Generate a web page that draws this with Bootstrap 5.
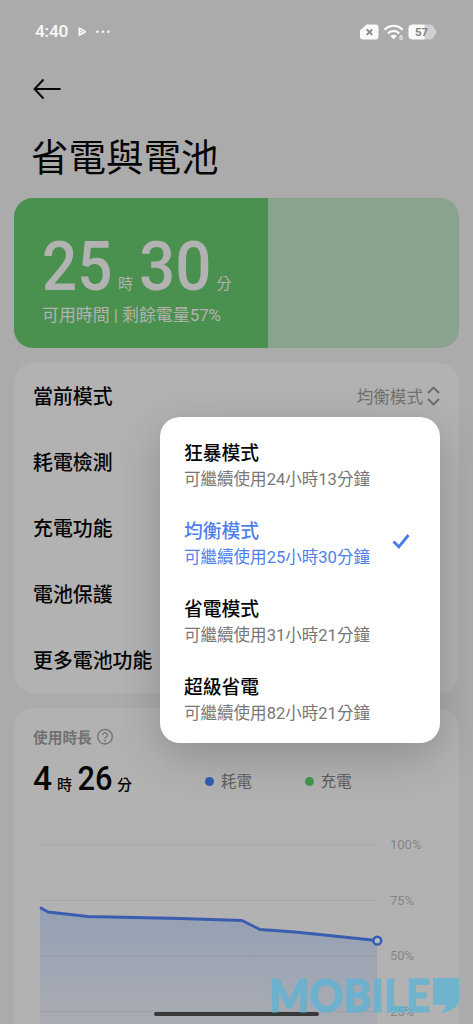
<!DOCTYPE html>
<html lang="zh-Hant">
<head>
<meta charset="utf-8">
<meta name="viewport" content="width=device-width, initial-scale=1">
<title>省電與電池</title>
<link href="https://cdn.jsdelivr.net/npm/bootstrap@5.3.0/dist/css/bootstrap.min.css" rel="stylesheet">
<style>
  html, body { height: 1024px; overflow: hidden; }
  body { background: #ababab; color: #050505; font-family: Roboto, "Noto Sans CJK TC", sans-serif; }
  svg { overflow: visible; }
  .screen { width: 473px; height: 1024px; padding: 0 14px; }
  .statusbar { height: 62px; padding: 2px 22px 0 21px; color: #fafafa; font-size: 17.3px; font-weight: 500; letter-spacing: -.2px; }
  .backbar { height: 54px; padding-left: 19px; }
  .page-title { height: 82px; line-height: 84px; padding-left: 17px; font-size: 37.5px; font-weight: 400; }
  .panel { background: #b2b2b2; border: 0; border-radius: 20px; }
  .battery { height: 150px; background: #8aa38f; border-radius: 19px; margin-bottom: 15px; }
  .battery .level { height: 100%; background: #4a9150; border-radius: 0; color: #b2b2b2; padding: 32px 0 0 28px; overflow: visible; text-align: left; justify-content: flex-start; }
  .row-item { height: 66px; padding: 4px 19px 0; background: transparent; border: 0; font-size: 19.9px; font-weight: 500; color: #050505; }
  .row-value { color: #707070; font-size: 16.6px; font-weight: 400; }
  .row-value svg { position: relative; top: -2px; }
  .usage { height: 340px; margin-top: 15px; }
  .usage-head { padding: 17px 19px 0; height: 42px; color: #717171; font-size: 14.7px; font-weight: 700; line-height: 24px; }
  .legend { color: #5e5e5e; font-size: 15.4px; padding: 15px 0 0 5px; }
  .dot { width: 9px; height: 9px; margin: -2px 7px 0 0; }
  .dot.drain { background: #345cb5; }
  .dot.charge { background: #439650; margin-left: 53px; }
  .mode-menu { left: 160px; top: 417px; width: 280px; height: 326px; padding: 7px 0; background: #fff; border: 0; border-radius: 20px; box-shadow: 0 14px 46px rgba(0,0,0,.2); display: block; }
  .mode { height: 78px; padding: 16px 29px 0 24px; color: #050505; }
  .mode b { display: block; font-size: 18.8px; line-height: 28px; font-weight: 500; }
  .mode small { display: block; font-size: 16.55px; line-height: 24px; color: #777; }
  .mode.chosen, .mode.chosen small { color: #4e7fec; }
  .watermark { left: 268px; top: 970px; }
  .home-bar { left: 154px; top: 1012px; width: 165px; height: 4px; border-radius: 2px; background: #383838; }
</style>
</head>
<body>
<div class="screen position-relative overflow-hidden">
  <header>
    <div class="statusbar d-flex align-items-center justify-content-between">
      <div class="d-flex align-items-center">
        <span>4:40</span>
        <svg class="ms-2" width="40" height="12" viewBox="0 0 40 12"><path d="M3.300 2.200 9.300 5.700 3.300 9.200Z M3.300 5.700H6" fill="none" stroke="#fafafa" stroke-width="1.600" stroke-linejoin="round"/><g fill="#fafafa"><circle cx="21.400" cy="5.700" r="1.250"/><circle cx="26.900" cy="5.700" r="1.250"/><circle cx="32.400" cy="5.700" r="1.250"/></g></svg>
      </div>
      <svg width="77" height="18" viewBox="0 0 77 18">
        <path d="M6.500 1.500H15.500a3 3 0 0 1 3 3v9a3 3 0 0 1-3 3H3a3 3 0 0 1-3-3V7.500Z" fill="#fafafa"/>
        <path d="m6.700 6.300 5.500 5.500m0-5.500-5.500 5.500" stroke="#858585" stroke-width="1.900"/>
        <g fill="none" stroke="#fafafa" stroke-width="2.300"><path d="M24.600 6.700c5-5.100 13-5.100 18 0"/><path d="M28 10.400c3.200-3.300 8-3.300 11.200 0"/></g>
        <path d="M30.300 12.900c1.900-1.700 4.700-1.700 6.600 0L33.600 16.300Z" fill="#fafafa"/>
        <text x="38.900" y="17" font-size="7" font-weight="700" fill="#e8e8e8">6</text>
        <path d="M64 1.500H70.500a3 3 0 0 1 2.500 1.500l3 4.600a2.500 2.500 0 0 1 0 2.800l-3 4.600a3 3 0 0 1-2.500 1.500H64Z" fill="#cfcfcf"/>
        <path d="M64.500 1.500H52.500a4 4 0 0 0-4 4v7a4 4 0 0 0 4 4h12Z" fill="#fafafa"/>
        <text x="55" y="13" font-size="11.500" font-weight="700" fill="#858585">57</text>
      </svg>
    </div>
    <div class="backbar d-flex align-items-center">
      <svg width="29" height="22" viewBox="0 0 29 22"><path d="M27.500 11H2M10.500 1.500 1.600 11l8.900 9.500" fill="none" stroke="#080808" stroke-width="2"/></svg>
    </div>
    <h1 class="page-title m-0">省電與電池</h1>
  </header>

  <section class="battery progress">
    <div class="progress-bar level" style="width:57%">
      <svg width="204" height="100" viewBox="0 0 204 100" fill="#b2b2b2">
        <text x="0" y="59.500" font-size="68.500" font-weight="500" textLength="70.500" lengthAdjust="spacingAndGlyphs">25</text>
        <text x="76" y="59" font-size="15">時</text>
        <text x="97" y="59.500" font-size="68.500" font-weight="500" textLength="72.500" lengthAdjust="spacingAndGlyphs">30</text>
        <text x="174.500" y="59" font-size="15">分</text>
        <text x="0" y="90.500" font-size="16.600" textLength="179" lengthAdjust="spacingAndGlyphs">可用時間 | 剩餘電量57%</text>
      </svg>
    </div>
  </section>

  <section class="panel list-group overflow-hidden">
    <div class="row-item list-group-item d-flex align-items-center justify-content-between">當前模式
      <span class="row-value d-flex align-items-center">均衡模式<svg class="ms-1" width="13" height="20" viewBox="0 0 13 20"><path d="m1 7 5.500-5.500L12 7M1 13l5.500 5.500L12 13" fill="none" stroke="#6a6a6a" stroke-width="1.900"/></svg></span>
    </div>
    <div class="row-item list-group-item d-flex align-items-center">耗電檢測</div>
    <div class="row-item list-group-item d-flex align-items-center">充電功能</div>
    <div class="row-item list-group-item d-flex align-items-center">電池保護</div>
    <div class="row-item list-group-item d-flex align-items-center">更多電池功能</div>
  </section>

  <section class="panel usage">
    <div class="usage-head d-flex align-items-center">使用時長
      <svg class="ms-1 mb-1" width="18" height="18" viewBox="0 0 18 18"><circle cx="9" cy="9.700" r="7.300" fill="none" stroke="#717171" stroke-width="1.300"/><path d="M6.700 8a2.300 2.300 0 1 1 3.500 2q-1.200.7-1.200 2" fill="none" stroke="#717171" stroke-width="1.300"/><circle cx="9" cy="13.800" r=".9" fill="#717171"/></svg>
    </div>
    <div class="d-flex align-items-center">
      <svg width="186" height="50" viewBox="0 0 186 50" fill="#050505" font-weight="500">
        <text x="19" y="40" font-size="34" textLength="19" lengthAdjust="spacingAndGlyphs">4</text>
        <text x="43" y="39.500" font-size="15">時</text>
        <text x="63.500" y="40" font-size="34" textLength="35" lengthAdjust="spacingAndGlyphs">26</text>
        <text x="103" y="39.500" font-size="15">分</text>
      </svg>
      <div class="legend d-flex align-items-center">
        <i class="dot drain rounded-circle"></i><span>耗電</span>
        <i class="dot charge rounded-circle"></i><span>充電</span>
      </div>
    </div>
    <svg class="d-block" width="445" height="224" viewBox="14 800 445 224">
      <defs><linearGradient id="fade" x1="0" y1="0" x2="0" y2="1"><stop offset="0" stop-color="#94a0b4"/><stop offset="1" stop-color="#a9abb2"/></linearGradient></defs>
      <path d="M40 908 48 912 88 916.500 180 918.500 242 920.500 260 929.500 295 932 377 940.500V1024H40Z" fill="url(#fade)"/>
      <g stroke="#808080" stroke-opacity=".18"><path d="M40 845h337M40 900.500h337M40 956h337M40 1011.500h337"/></g>
      <path d="M40 907.500 48 912 88 916.500 180 918.500 242 920.500 260 929.500 295 932 377 940.500" fill="none" stroke="#3a5daf" stroke-width="2.800" stroke-linejoin="round"/>
      <circle cx="377.300" cy="940.700" r="3.900" fill="#b4bac4" stroke="#345bb5" stroke-width="2.500"/>
      <g font-size="13" fill="#858585"><text x="390" y="849">100%</text><text x="390" y="904.500">75%</text><text x="390" y="960">50%</text><text x="390" y="1015.500">25%</text></g>
    </svg>
  </section>

  <div class="mode-menu position-absolute">
    <div class="mode"><b>狂暴模式</b><small>可繼續使用24小時13分鐘</small></div>
    <div class="mode chosen d-flex justify-content-between"><div><b>均衡模式</b><small>可繼續使用25小時30分鐘</small></div>
      <svg style="margin-top:15px" width="19" height="17" viewBox="0 0 19 17"><path d="m1.500 8.500 5.300 5.300L16.500 2" fill="none" stroke="#4a7bea" stroke-width="2.800"/></svg></div>
    <div class="mode"><b>省電模式</b><small>可繼續使用31小時21分鐘</small></div>
    <div class="mode"><b>超級省電</b><small>可繼續使用82小時21分鐘</small></div>
  </div>

  <div class="home-bar position-absolute"></div>
  <svg class="watermark position-absolute" width="196" height="50" viewBox="268 970 196 50" fill="#5ab4d6" opacity=".75">
    <text x="269" y="1012" font-family="Lato" font-weight="900" font-size="46" textLength="161" lengthAdjust="spacingAndGlyphs" stroke="#5ab4d6" stroke-width="1">MOBILE</text>
    <path d="M433 978h26v24q-3 9-19 11 6-4 6-8h-13Z"/>
  </svg>
</div>
<script src="https://cdn.jsdelivr.net/npm/bootstrap@5.3.0/dist/js/bootstrap.bundle.min.js"></script>
</body>
</html>
